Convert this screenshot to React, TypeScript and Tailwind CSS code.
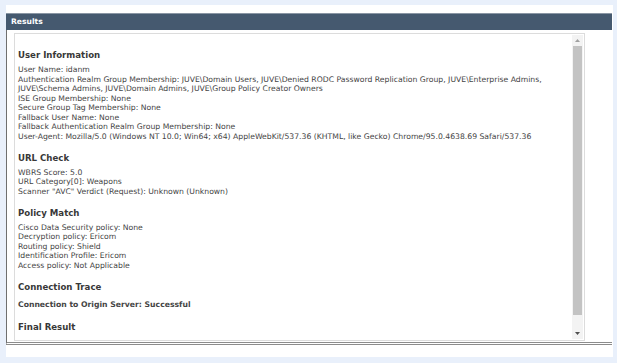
import React from "react";

const body = "text-[7.7px] leading-[9.5px] text-[#444]";
const head = "text-[8.6px] leading-[12px] font-bold text-[#383838] mb-[4px]";

function Lines({ items }: { items: string[] }) {
  return (
    <div className={body}>
      {items.map((t, i) => (
        <div key={i} className="whitespace-nowrap">{t}</div>
      ))}
    </div>
  );
}

export default function App() {
  return (
    <div
      className="w-[617px] h-[363px] bg-[#e9f0fb] pt-[5px] pl-[6px]"
      style={{ fontFamily: '"DejaVu Sans", Verdana, sans-serif' }}
    >
      <div className="w-[607px] h-[352px] bg-white flex flex-col">
        <div className="mt-[8px] w-[606px] h-[17px] bg-[#45596f] border-t border-[#8a96a4] flex items-center pl-[5px]">
          <span className="text-white font-bold text-[7.6px]">Results</span>
        </div>
        <div className="w-[606px] h-[315px] border-l border-[#6f6f6f] border-b-[3px] border-double border-r-0 border-t-0 border-b-[#8c8c8c] pt-[3px] pl-[7px]">
          <div className="w-[571px] h-[308px] border border-[#dcdcdc] flex">
            <div className="flex-1 pl-[3px] pt-[15px] overflow-hidden">
              <div className={head}>User Information</div>
              <Lines
                items={[
                  "User Name: idanm",
                  "Authentication Realm Group Membership: JUVE\\Domain Users, JUVE\\Denied RODC Password Replication Group, JUVE\\Enterprise Admins,",
                  "JUVE\\Schema Admins, JUVE\\Domain Admins, JUVE\\Group Policy Creator Owners",
                  "ISE Group Membership: None",
                  "Secure Group Tag Membership: None",
                  "Fallback User Name: None",
                  "Fallback Authentication Realm Group Membership: None",
                  "User-Agent: Mozilla/5.0 (Windows NT 10.0; Win64; x64) AppleWebKit/537.36 (KHTML, like Gecko) Chrome/95.0.4638.69 Safari/537.36",
                ]}
              />
              <div className={head + " mt-[10.5px]"}>URL Check</div>
              <Lines
                items={[
                  "WBRS Score: 5.0",
                  "URL Category[0]: Weapons",
                  'Scanner "AVC" Verdict (Request): Unknown (Unknown)',
                ]}
              />
              <div className={head + " mt-[10.5px]"}>Policy Match</div>
              <Lines
                items={[
                  "Cisco Data Security policy: None",
                  "Decryption policy: Ericom",
                  "Routing policy: Shield",
                  "Identification Profile: Ericom",
                  "Access policy: Not Applicable",
                ]}
              />
              <div className={head + " mt-[10.5px] mb-[7px]"}>Connection Trace</div>
              <div className={body + " font-bold"}>Connection to Origin Server: Successful</div>
              <div className={head + " mt-[12px]"}>Final Result</div>
            </div>
            <div className="w-[11px] mr-[1px] mt-[1px] mb-[1px] bg-[#f3f3f3] flex flex-col items-center">
              <div className="h-[11px] w-full flex items-center justify-center">
                <svg width="5" height="3" viewBox="0 0 5 3"><path d="M0 3 L2.5 0 L5 3 Z" fill="#a0a0a0" /></svg>
              </div>
              <div className="w-[9px] h-[269px] bg-[#c3c3c3]"></div>
              <div className="flex-1"></div>
              <div className="h-[11px] w-full flex items-center justify-center">
                <svg width="5" height="3" viewBox="0 0 5 3"><path d="M0 0 L5 0 L2.5 3 Z" fill="#505050" /></svg>
              </div>
            </div>
          </div>
        </div>
      </div>
    </div>
  );
}
